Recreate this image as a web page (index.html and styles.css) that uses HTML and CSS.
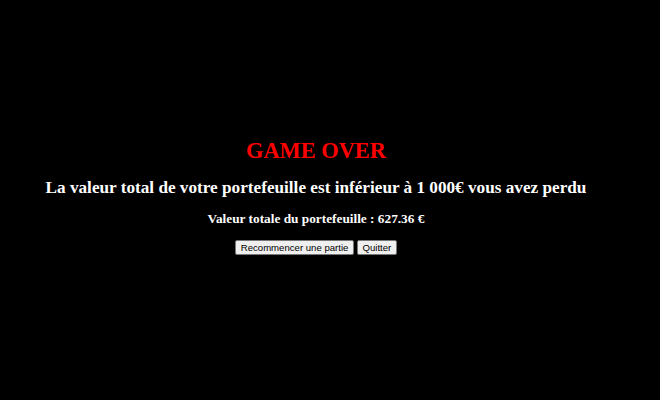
FILE: index.html
```html
<!DOCTYPE html>
<html lang="fr">
<head>
<meta charset="utf-8">
<link rel="stylesheet" href="styles.css">
</head>
<body>
<div class="screen">
  <h1 class="title">GAME OVER</h1>
  <h2 class="message">La valeur total de votre portefeuille est inférieur à 1 000€ vous avez perdu</h2>
  <p class="value">Valeur totale du portefeuille : 627.36 €</p>
  <div class="actions">
    <button class="btn">Recommencer une partie</button>
    <button class="btn">Quitter</button>
  </div>
</div>
</body>
</html>
```
FILE: styles.css
```css
html, body {
  margin: 0;
  padding: 0;
  background: #000;
}
.screen {
  height: 400px;
  box-sizing: border-box;
  padding-right: 28px;
  padding-bottom: 7px;
  display: flex;
  flex-direction: column;
  align-items: center;
  justify-content: center;
  font-family: "Liberation Serif", serif;
  color: #fff;
}
.title {
  color: #ff0000;
  font-size: 22.4px;
  font-weight: bold;
  margin: 0 0 14px;
}
.message {
  font-size: 17.2px;
  font-weight: bold;
  margin: 0 0 13px;
}
.value {
  font-size: 13.3px;
  font-weight: bold;
  margin: 0 0 13px;
}
.actions {
  display: flex;
  gap: 3px;
}
.btn {
  font-family: "Liberation Sans", Arial, sans-serif;
  font-size: 9.6px;
  line-height: 11px;
  padding: 1px 4.5px;
  background: #efefef;
  border: 1px solid #767676;
  border-radius: 2px;
  color: #000;
}
```
